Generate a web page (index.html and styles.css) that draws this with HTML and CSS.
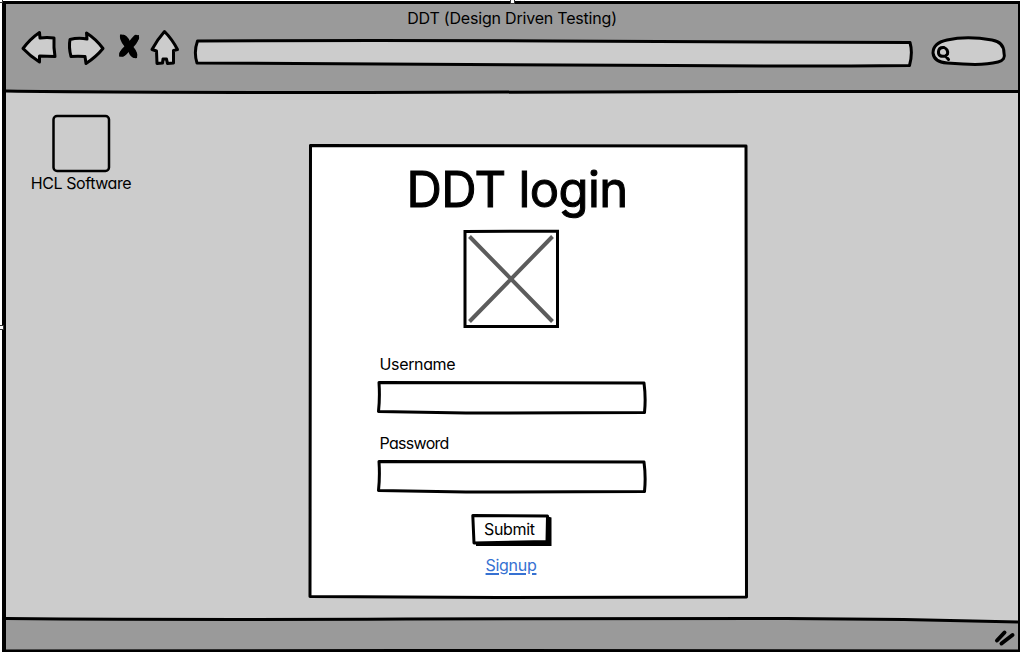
FILE: index.html
```html
<!DOCTYPE html>
<html lang="en">
<head>
<meta charset="utf-8">
<title>DDT (Design Driven Testing)</title>
<link rel="stylesheet" href="styles.css">
</head>
<body>
<div class="window">
  <header class="toolbar">
    <div class="window-title"><span>DDT (Design Driven Testing)</span></div>
    <nav class="controls">
      <svg class="nav-icons" viewBox="0 0 164 40" width="164" height="40">
        <g class="shape">
          <path d="M2 20.500 Q9 11 18.500 4.500 L19 10 Q26 9 33 10 Q32.500 20 34 28.500 Q26 28 18.500 28 L18.500 34 Q9 28 2 20.500Z"/>
          <path d="M82 20.500 Q75 11 65.500 5 L66 11 Q57 9.500 49 11.500 Q47.500 19 50 28.500 Q57 28 64 28.500 L65 35.500 Q75 29 82 20.500Z"/>
          <path d="M143.500 3.500 Q136 12 131 21.500 L135.500 23 L136 35.500 L141.500 35 L142 31 L145.500 31 L146.500 35.500 L152.500 35 L152.500 22.500 L156.500 21.500 Q151 11 143.500 3.500Z"/>
        </g>
        <g class="cross">
          <path d="M99 6.500 Q106 5.500 109 13.500 Q112 7 118 7 Q118.500 13 112.500 19 Q117.500 25 116 30 Q110 31 107.500 24 Q104 29.500 98 28.500 Q98 23 103.500 18.500 Q98 12 99 6.500Z"/>
          <path class="bar-thick" d="M102.500 10 L113 26.500 M115 10 L101.500 25.500"/>
        </g>
      </svg>
      <svg class="address" viewBox="0 0 720 32" width="720" height="32">
        <path class="shape" d="M4.500 4 Q180 3 360 4 T717 5.500 Q720 16 716.500 28.500 Q600 29.500 480 28.500 T4 26 Q.5 15 4.500 4Z"/>
      </svg>
      <svg class="search" viewBox="0 0 78 36" width="78" height="36">
        <path class="shape" d="M18 6 Q38 1.500 63 6 Q75 8 75 19 Q77 26 69 28 Q55 31.500 34 30 L18 29 Q5 28 4 19 Q4 9 18 6Z"/>
        <path class="lens" d="M9.500 17.500 Q10 13 15 13.500 Q19.500 15.500 18.500 20 L16.500 22 Q9 23.500 9.500 17.500 M16.500 22 L19.500 25.500"/>
      </svg>
    </nav>
    <svg class="divider" viewBox="0 0 1012 6" width="1012" height="6"><path class="below" d="M0 3 H1012 V7 H0Z"/><path class="rule" d="M0 2 Q120 3.500 360 3.500 T740 2.500 L1012 2.500"/></svg>
  </header>

  <main class="desktop">
    <figure class="shortcut">
      <svg viewBox="0 0 60 60" width="60" height="60"><rect class="tile" x="2.500" y="3" width="55.500" height="55" rx="3.500"/></svg>
      <figcaption>HCL Software</figcaption>
    </figure>

    <form class="login">
      <svg class="backing" viewBox="0 0 440 456" width="440" height="456">
        <path d="M2.500 2.500 L438 3 Q438.500 230 438.500 454 L190 454.500 L2 453.500 Q2.500 220 2.500 2.500Z"/>
      </svg>
      <div class="login-body">
        <h1>DDT login</h1>
        <svg class="picture" viewBox="0 0 98 100" width="98" height="100">
          <path class="line square" d="M3 3.500 L95.500 3.200 L95.500 98.500 L3 98.500Z"/>
          <path class="diagonal" d="M7.500 8.500 L90.500 93.500 M90.500 8.500 L7.500 93.500"/>
        </svg>
        <div class="field">
          <span class="label user">Username</span>
          <svg viewBox="0 0 272 34" width="272" height="34"><path class="line" d="M3 2.500 L268 3 Q270 18 268.500 32.500 L90 33 L2.500 31.500 Q4 18 3 2.500Z"/></svg>
        </div>
        <div class="field">
          <span class="label pass">Password</span>
          <svg viewBox="0 0 272 34" width="272" height="34"><path class="line" d="M3 2.500 L268 3 Q270 18 268.500 32.500 L90 33 L2.500 31.500 Q4 18 3 2.500Z"/></svg>
        </div>
        <div class="submit">
          <svg viewBox="0 0 82 34" width="82" height="34">
            <path class="shadow" d="M5 7 L77 3.500 L80.500 4.500 L80.500 33 L5 33Z"/>
            <path class="face" d="M1.800 2.500 L76.500 3 L76 28.500 L3 30Z"/>
          </svg>
          <span>Submit</span>
        </div>
        <a class="signup">Signup</a>
      </div>
    </form>
  </main>

  <footer class="status">
    <svg viewBox="0 0 1012 36" width="1012" height="36">
      <path class="bar" d="M0 3.500 Q180 5 400 4 T780 3.500 Q900 4 1012 7 V36 H0Z"/>
      <path class="edge" d="M0 3.500 Q180 5 400 4 T780 3.500 Q900 4 1012 7"/>
      <path class="edge" d="M0 36 Q180 36.500 400 35.500 L1012 36"/>
      <path class="grip" d="M991 25.500 L998.500 17.500 M995.500 28.500 L1006.500 20"/>
    </svg>
  </footer>
</div>
<i class="handle corner"></i><i class="handle top"></i><i class="handle side"></i>
</body>
</html>
```
FILE: styles.css
```css
* { box-sizing: border-box; }

body {
  margin: 0;
  width: 1020px;
  height: 652px;
  overflow: hidden;
  padding: 1px 0 0 2px;
  background: #fff;
  color: #000;
  font: 16px/20px Inter, "Open Sans", sans-serif;
  font-feature-settings: "cv11" 1;
}

svg { display: block; overflow: visible; }

.window {
  width: 1018px;
  height: 651px;
  display: grid;
  grid-template-rows: 91px 520px 36px;
  border: solid #000;
  border-width: 3px 2px 0 4px;
  background: #ccc;
}

.toolbar {
  display: flex;
  flex-direction: column;
  background: #9a9a9a;
}

.window-title {
  height: 24px;
  padding-top: 4px;
  text-align: center;
  white-space: nowrap;
}

.window-title span { letter-spacing: -0.2px; }

.controls {
  display: flex;
  height: 61px;
  padding: 0 11px 0 15px;
}

.nav-icons { margin-right: 8px; }
.address { margin-top: 9px; }
.search { margin: 6px 0 0 16px; }

.shape {
  fill: #ccc;
  stroke: #000;
  stroke-width: 3;
  stroke-linejoin: round;
}

.bar-thick {
  stroke: #000;
  stroke-width: 6;
  stroke-linecap: round;
}

.lens {
  fill: none;
  stroke: #000;
  stroke-width: 3;
  stroke-linecap: round;
}

.divider .below { fill: #ccc; }

.divider .rule {
  fill: none;
  stroke: #000;
  stroke-width: 3;
}

.desktop {
  display: grid;
  grid-template-columns: 302px 440px;
  align-items: start;
}

.shortcut {
  width: 150px;
  margin: 18px 0 0;
  display: flex;
  flex-direction: column;
  align-items: center;
}

.shortcut figcaption {
  letter-spacing: -0.42px;
  white-space: nowrap;
}

.tile {
  fill: none;
  stroke: #000;
  stroke-width: 2.5;
}

.login {
  display: grid;
  margin: 48px 0 0;
}

.backing,
.login-body { grid-area: 1 / 1; }

.backing path {
  fill: #fff;
  stroke: #000;
  stroke-width: 3;
  stroke-linejoin: round;
}

.login-body {
  display: flex;
  flex-direction: column;
  align-items: center;
  padding-right: 44px;
  padding-left: 4px;
}

h1 {
  margin: 17px 0 0 18px;
  font-size: 49px;
  line-height: 60px;
  font-weight: 400;
  letter-spacing: -0.65px;
  white-space: nowrap;
  -webkit-text-stroke: 1px #000;
}

.picture { margin: 8px 0 0 6px; }

.line {
  fill: none;
  stroke: #000;
  stroke-width: 3;
  stroke-linejoin: round;
}

.square { stroke-linejoin: miter; }

.diagonal {
  fill: none;
  stroke: #5c5c5c;
  stroke-width: 4;
}

.field {
  display: flex;
  flex-direction: column;
  width: 272px;
  margin-left: 8px;
}

.picture + .field { margin-top: 26px; }
.field + .field { margin-top: 19px; }
.label { height: 26px; padding-left: 3.5px; }
.user { letter-spacing: -0.35px; }
.pass { letter-spacing: -0.7px; }

.submit {
  display: grid;
  margin: 20px 0 0 8px;
}

.submit svg,
.submit span { grid-area: 1 / 1; }

.submit span {
  padding: 6px 0 0 13px;
  letter-spacing: -0.35px;
}

.face {
  fill: #fff;
  stroke: #000;
  stroke-width: 3;
  stroke-linejoin: round;
}

.signup {
  margin: 8px 0 0 6px;
  color: #3671d2;
  letter-spacing: -0.3px;
  text-decoration: underline;
  text-decoration-thickness: 1.5px;
  text-underline-offset: 2px;
}

.bar { fill: #9a9a9a; }

.edge {
  fill: none;
  stroke: #000;
  stroke-width: 3;
}

.grip {
  stroke: #000;
  stroke-width: 4;
  stroke-linecap: round;
}

.handle {
  position: absolute;
  width: 5px;
  height: 5px;
  border: 1px solid #333;
  background: #fff;
}

.corner { left: -2px; top: -2px; }
.top { left: 510px; top: -1px; }
.side { left: -1px; top: 325px; }
```
